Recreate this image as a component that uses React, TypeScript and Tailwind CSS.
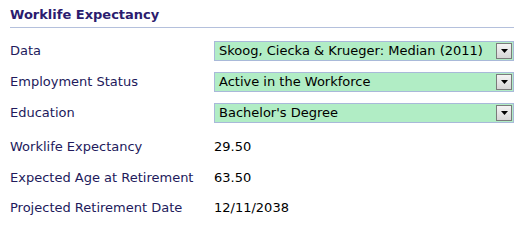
const selects = [
  { label: "Data", value: "Skoog, Ciecka & Krueger: Median (2011)" },
  { label: "Employment Status", value: "Active in the Workforce" },
  { label: "Education", value: "Bachelor's Degree" },
];

const results = [
  { label: "Worklife Expectancy", value: "29.50" },
  { label: "Expected Age at Retirement", value: "63.50" },
  { label: "Projected Retirement Date", value: "12/11/2038" },
];

function SelectBox({ value }: { value: string }) {
  return (
    <div className="flex h-[20px] w-[300px] items-center justify-between border border-[#a9b9d9] bg-[#b1edc5] pl-[4px] pr-[1px]">
      <span className="whitespace-nowrap text-[13px] leading-[18px] text-black">{value}</span>
      <div className="flex h-[16px] w-[16px] items-center justify-center border border-[#7a7a7a] bg-gradient-to-b from-[#f4f4f4] to-[#d6d6d6]">
        <svg width="7" height="4" viewBox="0 0 7 4">
          <path d="M0 0h7L3.5 4z" fill="#000" />
        </svg>
      </div>
    </div>
  );
}

export default function App() {
  return (
    <div className="w-[524px] bg-white px-[10px] font-['Verdana','DejaVu_Sans',sans-serif]">
      <div className="border-b border-[#b4c0dc] pb-[4px] pt-[7px] text-[13px] font-bold leading-[16px] text-[#2b1c6e]">
        Worklife Expectancy
      </div>
      <div className="mt-[13px] flex flex-col gap-[11px]">
        {selects.map((s) => (
          <div key={s.label} className="flex h-[20px] items-center">
            <div className="w-[204px] text-[13px] text-[#221a5c]">{s.label}</div>
            <SelectBox value={s.value} />
          </div>
        ))}
      </div>
      <div className="mt-[14px] flex flex-col gap-[10.5px]">
        {results.map((r) => (
          <div key={r.label} className="flex h-[20px] items-center">
            <div className="w-[204px] text-[13px] text-[#221a5c]">{r.label}</div>
            <div className="text-[13px] text-black">{r.value}</div>
          </div>
        ))}
      </div>
    </div>
  );
}
